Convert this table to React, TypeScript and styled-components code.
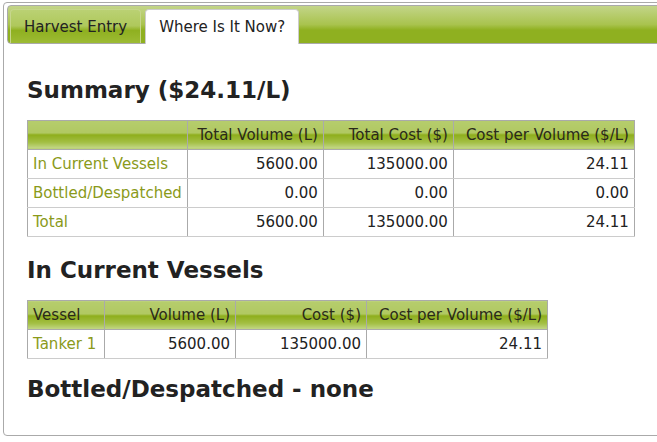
import { createGlobalStyle, styled } from 'styled-components';

const GlobalStyle = createGlobalStyle`
  html, body {
    margin: 0;
    padding: 0;
    background: #fff;
    overflow: hidden;
  }
  body {
    font-family: 'DejaVu Sans', Verdana, sans-serif;
    color: #222;
  }
`;

const Panel = styled.div`
  margin: 2px 0 0 3px;
  width: 700px;
  height: 434px;
  box-sizing: border-box;
  border: 1px solid #aaa;
  border-radius: 4px;
  padding: 2px 3px;
`;

const TabBar = styled.ul`
  list-style: none;
  margin: 0;
  padding: 3px 0 0 2px;
  height: 39px;
  box-sizing: border-box;
  display: flex;
  align-items: flex-end;
  gap: 4px;
  border: 1px solid #aaa;
  border-radius: 4px 0 0 4px;
  background: linear-gradient(#c3d589 0%, #a9c34e 50%, #8fb020 65%, #8fb020 100%);
`;

const Tab = styled.li<{ $active?: boolean }>`
  box-sizing: border-box;
  padding: 0 13px;
  display: flex;
  align-items: center;
  font-size: 15px;
  border: 1px solid ${({ $active }) => ($active ? '#ccc' : '#c6d68c')};
  border-bottom: none;
  border-radius: 4px 4px 0 0;
  color: #222;
  background: ${({ $active }) =>
    $active
      ? '#fff'
      : 'linear-gradient(#bad173 0%, #afc85c 48%, #8fb020 62%, #9dbb34 100%)'};
  margin-bottom: ${({ $active }) => ($active ? '-1px' : '0')};
  height: ${({ $active }) => ($active ? '35px' : '34px')};
`;

const Content = styled.div`
  padding: 33px 0 0 20px;
`;

const Heading = styled.h2<{ $top: number }>`
  margin: ${({ $top }) => $top}px 0 0;
  font-size: 23px;
  font-weight: bold;
  line-height: 1.2;
  color: #222;
`;

const Table = styled.table<{ $top: number }>`
  margin-top: ${({ $top }) => $top}px;
  border-collapse: collapse;
  border: 1px solid #aaa;
  font-size: 15px;
`;

const Th = styled.th<{ $w: number; $left?: boolean }>`
  width: ${({ $w }) => $w}px;
  box-sizing: border-box;
  height: 29px;
  padding: 0 5px;
  font-weight: normal;
  text-align: ${({ $left }) => ($left ? 'left' : 'right')};
  color: #2a2a1a;
  border: 1px solid #aaa;
  background: linear-gradient(#b6cd6c 0%, #b0c862 46%, #8dad1a 50%, #a3bf44 78%, #c4d88b 100%);
  white-space: nowrap;
`;

const Td = styled.td<{ $label?: boolean }>`
  height: 28px;
  padding: 0 5px;
  text-align: ${({ $label }) => ($label ? 'left' : 'right')};
  color: ${({ $label }) => ($label ? '#8a9a1a' : '#222')};
  border-top: 1px solid #ccc;
  border-bottom: 1px solid #ccc;
  border-left: 1px solid #aaa;
  border-right: 1px solid #aaa;
  white-space: nowrap;
`;

const summaryRows = [
  ['In Current Vessels', '5600.00', '135000.00', '24.11'],
  ['Bottled/Despatched', '0.00', '0.00', '0.00'],
  ['Total', '5600.00', '135000.00', '24.11'],
];

const vesselRows = [['Tanker 1', '5600.00', '135000.00', '24.11']];

const App = () => {
  return (
    <>
      <GlobalStyle />
      <Panel>
        <TabBar>
          <Tab>Harvest Entry</Tab>
          <Tab $active>Where Is It Now?</Tab>
        </TabBar>
        <Content>
          <Heading $top={0}>Summary ($24.11/L)</Heading>
          <Table $top={15}>
            <thead>
              <tr>
                <Th $w={159} $left></Th>
                <Th $w={136}>Total Volume (L)</Th>
                <Th $w={130}>Total Cost ($)</Th>
                <Th $w={181}>Cost per Volume ($/L)</Th>
              </tr>
            </thead>
            <tbody>
              {summaryRows.map((row) => (
                <tr key={row[0]}>
                  {row.map((cell, i) => (
                    <Td key={i} $label={i === 0}>{cell}</Td>
                  ))}
                </tr>
              ))}
            </tbody>
          </Table>
          <Heading $top={20}>In Current Vessels</Heading>
          <Table $top={16}>
            <thead>
              <tr>
                <Th $w={77} $left>Vessel</Th>
                <Th $w={131}>Volume (L)</Th>
                <Th $w={131}>Cost ($)</Th>
                <Th $w={181}>Cost per Volume ($/L)</Th>
              </tr>
            </thead>
            <tbody>
              {vesselRows.map((row) => (
                <tr key={row[0]}>
                  {row.map((cell, i) => (
                    <Td key={i} $label={i === 0}>{cell}</Td>
                  ))}
                </tr>
              ))}
            </tbody>
          </Table>
          <Heading $top={17}>Bottled/Despatched - none</Heading>
        </Content>
      </Panel>
    </>
  );
};

export default App;
